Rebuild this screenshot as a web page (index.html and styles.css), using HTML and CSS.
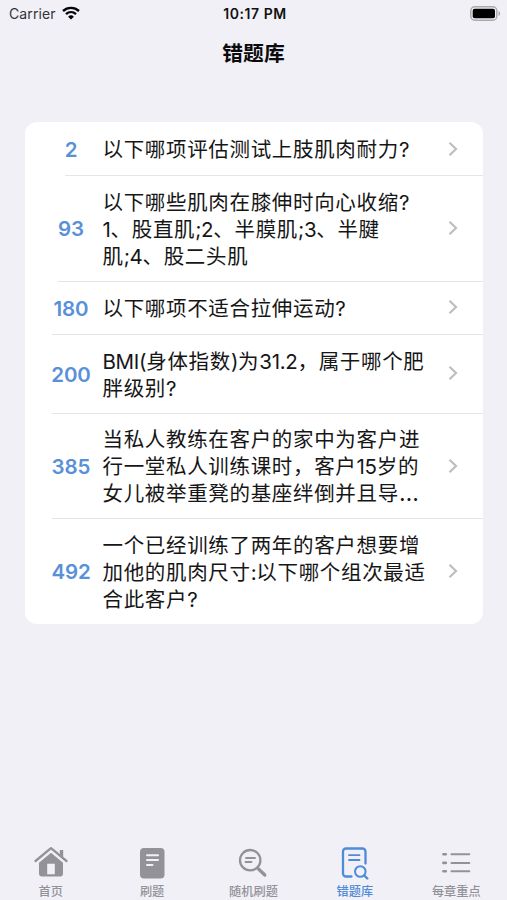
FILE: index.html
```html
<!DOCTYPE html>
<html lang="zh-CN">
<head>
<meta charset="utf-8">
<meta name="viewport" content="width=device-width, initial-scale=1">
<title>错题库</title>
<link rel="stylesheet" href="styles.css">
</head>
<body>
<div class="app">
  <div class="status">
    <div class="carrier"><span>Carrier</span>
      <svg class="wifi" width="18" height="14" viewBox="0 0 18 14" fill="none" stroke="#050507" stroke-width="2.4"><path d="M1 5C5.5.8 12.5.8 17 5M4 8.1c2.9-2.6 7.100-2.600 10 0"/><path d="M9 13.600L6.100 10.700a4.200 4.200 0 0 1 5.800 0Z" fill="#050507" stroke="none"/></svg>
    </div>
    <span class="time">10:17 PM</span>
    <svg class="battery" width="31" height="15" viewBox="0 0 31 15"><rect x=".8" y=".8" width="26" height="13.400" rx="4" fill="#f1f1f5" stroke="#aaaaad" stroke-width="1.500"/><rect x="2.700" y="2.700" width="22.300" height="9.600" rx="2" fill="#000"/><path d="M28.500 5v5c2.200-.7 2.200-4.300 0-5Z" fill="#aaaaad"/></svg>
  </div>
  <h1 class="title">错题库</h1>
  <main class="card">
    <a class="row single"><span class="num">2</span><span class="text"><span>以下哪项评估测试上肢肌肉耐力?</span></span><svg class="chev" viewBox="0 0 10 16"><path d="M1.500 1.700L8 8l-6.500 6.300"/></svg></a>
    <a class="row triple sep-short"><span class="num">93</span><span class="text"><span>以下哪些肌肉在膝伸时向心收缩?</span><span><b>1</b>、股直肌<b>;2</b>、半膜肌<b>;3</b>、半腱</span><span>肌<b>;4</b>、股二头肌</span></span><svg class="chev" viewBox="0 0 10 16"><path d="M1.500 1.700L8 8l-6.500 6.300"/></svg></a>
    <a class="row single sep-mid"><span class="num">180</span><span class="text"><span>以下哪项不适合拉伸运动?</span></span><svg class="chev" viewBox="0 0 10 16"><path d="M1.500 1.700L8 8l-6.500 6.300"/></svg></a>
    <a class="row double sep-long"><span class="num">200</span><span class="text"><span><b>BMI(</b>身体指数<b>)</b>为<b>31.2</b>，属于哪个肥</span><span>胖级别?</span></span><svg class="chev" viewBox="0 0 10 16"><path d="M1.500 1.700L8 8l-6.500 6.300"/></svg></a>
    <a class="row triple sep-long"><span class="num">385</span><span class="text"><span>当私人教练在客户的家中为客户进</span><span>行一堂私人训练课时，客户<b>15</b>岁的</span><span>女儿被举重凳的基座绊倒并且导<i>…</i></span></span><svg class="chev" viewBox="0 0 10 16"><path d="M1.500 1.700L8 8l-6.500 6.300"/></svg></a>
    <a class="row triple sep-long"><span class="num">492</span><span class="text"><span>一个已经训练了两年的客户想要增</span><span>加他的肌肉尺寸<b>:</b>以下哪个组次最适</span><span>合此客户?</span></span><svg class="chev" viewBox="0 0 10 16"><path d="M1.500 1.700L8 8l-6.500 6.300"/></svg></a>
  </main>
  <nav class="tabs">
    <a class="tab"><svg width="36" height="36" viewBox="0 0 36 36"><path d="M2.500 17L18 4.200 33.500 17" fill="none" stroke="currentColor" stroke-width="2.300" stroke-linecap="round" stroke-linejoin="round"/><path d="M26.800 6h3.400V14L26.800 11Z" fill="currentColor"/><path fill-rule="evenodd" d="M18 8.800L30 18.800v10.700a3 3 0 0 1-3 3H9a3 3 0 0 1-3-3V18.800Zm-3.800 11v10.500h7.600V19.800Z" fill="currentColor"/></svg><span>首页</span></a>
    <a class="tab"><svg width="36" height="36" viewBox="0 0 36 36"><rect x="6" y="4" width="24.500" height="30.500" rx="4" fill="currentColor"/><path d="M13 11.200h11M13 16h11M13 20.900h5.500" stroke="#f1f1f6" stroke-width="2" stroke-linecap="round"/></svg><span>刷题</span></a>
    <a class="tab"><svg width="36" height="36" viewBox="0 0 36 36" fill="none" stroke="currentColor" stroke-linecap="round"><circle cx="15.200" cy="16.200" r="10.200" stroke-width="2.300"/><path d="M11 14h9M10.500 18h6" stroke-width="1.800"/><path d="M23.500 25l6.300 6" stroke-width="3.300"/></svg><span>随机刷题</span></a>
    <a class="tab active"><svg width="36" height="36" viewBox="0 0 36 36" fill="none" stroke="currentColor" stroke-width="2.300" stroke-linecap="round" stroke-linejoin="round"><path d="M14.500 32.500H9A3 3 0 0 1 6 29.500V7.500A3 3 0 0 1 9 4.500h16.500A3 3 0 0 1 28.500 7.500v12"/><path d="M12 11.200h10.500M12 16h10.500" stroke-width="1.800"/><circle cx="23.300" cy="27.500" r="5.300" stroke-width="2"/><path d="M27.300 31.500l3 3" stroke-width="2.400"/></svg><span>错题库</span></a>
    <a class="tab"><svg width="36" height="36" viewBox="0 0 36 36" fill="none" stroke="currentColor" stroke-width="2" stroke-linecap="round"><path d="M13.500 10.300h17.800M13.500 18.900h17.800M13.500 27.300h17.800"/><path d="M5.400 10.300h2.400M5.400 18.900h2.400M5.400 27.300h2.400" stroke-width="2.600"/></svg><span>每章重点</span></a>
  </nav>
</div>
</body>
</html>
```
FILE: styles.css
```css
* { box-sizing: border-box; }
body { margin: 0; background: #f1f0f6; color: #161616; font-family: Inter, "Noto Sans CJK SC", sans-serif; }
.app { height: 900px; display: flex; flex-direction: column; overflow: hidden; }
.status { height: 28px; padding: 0 6px 0 9px; display: grid; grid-template-columns: 1fr auto 1fr; align-items: center; font-size: 14px; line-height: 28px; }
.carrier { display: flex; align-items: center; gap: 6px; color: #333338; letter-spacing: .1px; }
.wifi { margin-bottom: 2px; }
.time { font-weight: 600; color: #111; letter-spacing: .55px; }
.battery { justify-self: end; margin-bottom: 2px; }
.title { height: 48px; margin: 0; padding-top: 2px; text-align: center; font-size: 20.800px; line-height: 48px; font-weight: 700; color: #0b0b0d; }
.card { width: 458px; margin: 46px 0 0 25px; border-radius: 12px; overflow: hidden; background: #fff; }
.row { display: grid; grid-template-columns: 52px 1fr 10px; column-gap: 0; padding: 0 25px 0 20px; align-items: center; position: relative; }
.single { height: 53.300px; }
.double { height: 79px; }
.triple { height: 105.400px; }
.num { padding: 1.500px 0 0; text-align: center; font-size: 20.500px; font-weight: 600; color: #5990da; letter-spacing: -.1px; }
.text { padding: 2.600px 0 0 5.500px; font-size: 20.500px; letter-spacing: .67px; line-height: 27px; white-space: nowrap; }
.text > span { display: block; }
.text b { font-weight: 400; letter-spacing: -.3px; }
.text i { font-style: normal; font-size: 23px; line-height: 1; }
.chev { width: 10px; height: 16px; fill: none; stroke: #bebec1; stroke-width: 2.200; }
.row + .row::before { content: ""; position: absolute; top: 0; right: 0; height: 1px; left: 40px; background: #e5e5e7; }
.row.sep-short::before { left: 40px; }
.row.sep-mid::before { left: 33px; }
.row.sep-long::before { left: 27px; }
.tabs { margin-top: auto; height: 56px; display: grid; grid-template-columns: repeat(5, 1fr); }
.tab { display: flex; flex-direction: column; align-items: center; color: #929298; }
.tab span { font-size: 12.200px; line-height: 18px; font-weight: 500; margin-top: 3px; }
.tab.active { color: #4f8bd9; }
```
